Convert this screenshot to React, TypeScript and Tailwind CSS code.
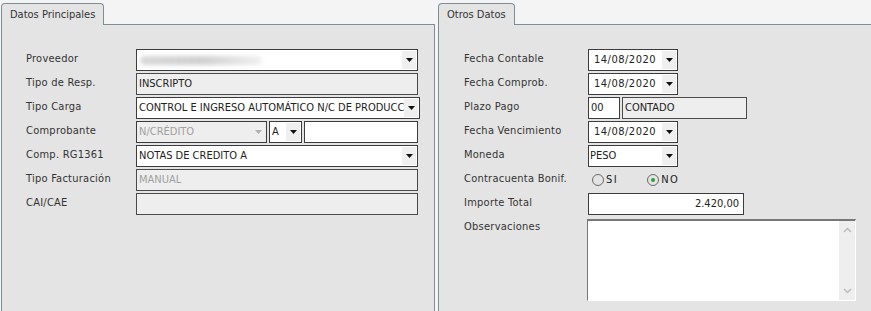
import React from "react"

const border = "border-[#7f8e95]"

function Arrow({ disabled }: { disabled?: boolean }) {
  return (
    <div className="w-[14px] self-stretch my-[1px] mr-[1px] bg-[#efefef] flex items-center justify-center shrink-0">
      <svg width="7" height="4" viewBox="0 0 7 4">
        <path d="M0 0h7L3.5 4z" fill={disabled ? "#b0b0b0" : "#111"} />
      </svg>
    </div>
  )
}

function Select({ value, className = "", disabled, pad = "pl-[2px]" }: { value?: string; className?: string; disabled?: boolean; pad?: string }) {
  return (
    <div className={`h-[22px] flex border border-[#3c3c3c] ${disabled ? "bg-[#eeeeee] text-[#a0a0a0]" : "bg-white text-[#222]"} ${className}`}>
      <div className={`flex-1 flex items-center overflow-hidden whitespace-nowrap ${pad}`}>{value}</div>
      <Arrow disabled={disabled} />
    </div>
  )
}

function ReadOnly({ value, className = "", gray }: { value?: string; className?: string; gray?: boolean }) {
  return (
    <div className={`h-[22px] flex items-center pl-[2px] border border-[#4a4a4a] bg-[#eeeeee] whitespace-nowrap ${gray ? "text-[#a0a0a0]" : "text-[#222]"} ${className}`}>
      {value}
    </div>
  )
}

function Input({ value, className = "" }: { value?: string; className?: string }) {
  return (
    <div className={`h-[22px] flex items-center px-[2px] border border-[#3c3c3c] bg-white text-[#222] ${className}`}>
      {value}
    </div>
  )
}

function Row({ label, w, children }: { label: string; w: string; children: React.ReactNode }) {
  return (
    <div className="flex items-start">
      <div className={`${w} shrink-0 pt-[2px] text-[#333] leading-[15px] tracking-[0.25px]`}>{label}</div>
      <div className="flex-1 flex">{children}</div>
    </div>
  )
}

function Radio({ label, checked }: { label: string; checked?: boolean }) {
  return (
    <div className="flex items-center gap-[2px]">
      <div className="w-[12px] h-[12px] rounded-full border border-[#6a6a6a] flex items-center justify-center">
        {checked && <div className="w-[4px] h-[4px] rounded-full bg-[#2e9e3a]" />}
      </div>
      <span className="text-[#222] tracking-[1.5px]">{label}</span>
    </div>
  )
}

function Panel({ title, className, children }: { title: string; className: string; children: React.ReactNode }) {
  return (
    <div className={`flex flex-col ${className}`}>
      <div className="flex h-[25px] pt-[3px]">
        <div className={`border border-b-0 ${border} rounded-t-[4px] bg-[#e4e4e4] px-[8px] pt-[3px] text-[#333]`}>
          {title}
        </div>
        <div className={`flex-1 border-b ${border}`} />
      </div>
      <div className={`flex-1 border-l border-r ${border} bg-[#e4e4e4] pt-[24px]`}>{children}</div>
    </div>
  )
}

export default function App() {
  return (
    <div className="w-[871px] h-[311px] bg-[#f4f4f4] flex overflow-hidden text-[11px] font-['DejaVu_Sans_Condensed','DejaVu_Sans',sans-serif] font-stretch-condensed">
      <Panel title="Datos Principales" className="w-[434px] ml-[1px]">
        <div className="flex flex-col gap-[2px] pl-[24px] pr-[16px]">
          <Row label="Proveedor" w="w-[110px]">
            <div className="h-[22px] flex flex-1 border border-[#3c3c3c] bg-white">
              <div className="flex-1 flex items-center pl-[3px]">
                <div className="w-[122px] h-[9px] rounded-full bg-gradient-to-r from-[#d8d8d8] via-[#cfcfcf] to-[#f0f0f0] blur-[2px]" />
              </div>
              <Arrow />
            </div>
          </Row>
          <Row label="Tipo de Resp." w="w-[110px]">
            <ReadOnly value="INSCRIPTO" className="flex-1" />
          </Row>
          <Row label="Tipo Carga" w="w-[110px]">
            <Select value="CONTROL E INGRESO AUTOMÁTICO N/C DE PRODUCC" className="flex-1" />
          </Row>
          <Row label="Comprobante" w="w-[110px]">
            <Select value="N/CRÉDITO" disabled className="w-[131px]" />
            <Select value="A" className="w-[33px] ml-[2px]" />
            <Input className="flex-1 ml-[2px]" />
          </Row>
          <Row label="Comp. RG1361" w="w-[110px]">
            <Select value="NOTAS DE CREDITO A" className="flex-1" />
          </Row>
          <Row label="Tipo Facturación" w="w-[110px]">
            <ReadOnly value="MANUAL" gray className="flex-1" />
          </Row>
          <Row label="CAI/CAE" w="w-[110px]">
            <ReadOnly className="flex-1" />
          </Row>
        </div>
      </Panel>
      <Panel title="Otros Datos" className="flex-1 ml-[3px] mr-[-2px]">
        <div className="flex flex-col gap-[2px] pl-[25px]">
          <Row label="Fecha Contable" w="w-[124px]">
            <Select value="14/08/2020" pad="pl-[5px] tracking-[0.5px]" className="w-[90px]" />
          </Row>
          <Row label="Fecha Comprob." w="w-[124px]">
            <Select value="14/08/2020" pad="pl-[5px] tracking-[0.5px]" className="w-[90px]" />
          </Row>
          <Row label="Plazo Pago" w="w-[124px]">
            <Input value="00" className="w-[32px]" />
            <ReadOnly value="CONTADO" className="w-[125px] ml-[2px]" />
          </Row>
          <Row label="Fecha Vencimiento" w="w-[124px]">
            <Select value="14/08/2020" pad="pl-[5px] tracking-[0.5px]" className="w-[90px]" />
          </Row>
          <Row label="Moneda" w="w-[124px]">
            <Select value="PESO" pad="pl-[1px]" className="w-[90px]" />
          </Row>
          <Row label="Contracuenta Bonif." w="w-[124px]">
            <div className="h-[22px] flex items-center gap-[29px] pl-[4px]">
              <Radio label="SI" />
              <Radio label="NO" checked />
            </div>
          </Row>
          <Row label="Importe Total" w="w-[124px]">
            <Input value="2.420,00" className="w-[156px] justify-end pr-[4px]" />
          </Row>
          <Row label="Observaciones" w="w-[124px]">
            <div className="w-[269px] h-[82px] mt-[2px] -ml-[1px] flex border-t-2 border-l border-t-[#777] border-l-[#777] border-r border-b border-r-white border-b-white bg-white">
              <div className="flex-1" />
              <div className="w-[16px] bg-[#eeeeee] flex flex-col justify-between items-center py-[6px]">
                <svg width="9" height="6" viewBox="0 0 9 6">
                  <path d="M1 5L4.5 1.5L8 5" stroke="#bcbcbc" strokeWidth="1.5" fill="none" />
                </svg>
                <svg width="9" height="6" viewBox="0 0 9 6">
                  <path d="M1 1L4.5 4.5L8 1" stroke="#bcbcbc" strokeWidth="1.5" fill="none" />
                </svg>
              </div>
            </div>
          </Row>
        </div>
      </Panel>
    </div>
  )
}
